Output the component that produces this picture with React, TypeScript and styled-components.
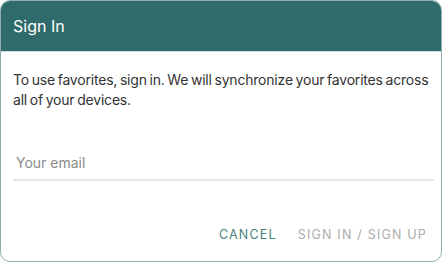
import React from 'react'
import styled, { createGlobalStyle } from 'styled-components'

const GlobalStyle = createGlobalStyle`
  html, body {
    margin: 0;
    padding: 0;
    background: #ffffff;
  }
  * {
    box-sizing: border-box;
  }
`

const Dialog = styled.div`
  width: 442px;
  height: 262px;
  border: 1px solid #8cafae;
  border-radius: 10px;
  overflow: hidden;
  display: flex;
  flex-direction: column;
  background: #ffffff;
  font-family: Inter, "Liberation Sans", sans-serif;
`

const Header = styled.div`
  height: 51px;
  background: #2f6b6a;
  color: #ffffff;
  display: flex;
  align-items: center;
  padding: 0 12px 0;
  font-size: 16px;
  border-bottom: 1px solid #cfe0df;
`

const Body = styled.div`
  flex: 1;
  display: flex;
  flex-direction: column;
  padding: 18px 7px 0 12px;
`

const Message = styled.p`
  margin: 0 -5px 0 0;
  font-size: 14px;
  line-height: 20px;
  color: #333333;
  letter-spacing: -0.2px;
  word-spacing: -1px;
`

const EmailInput = styled.input`
  margin-top: 42px;
  width: 421px;
  height: 29px;
  border: none;
  border-bottom: 2px solid #e6e6e6;
  outline: none;
  padding: 0 3px 6px;
  font-family: inherit;
  font-size: 14px;
  color: #333333;
  &::placeholder {
    color: #8a8a8a;
  }
`

const Actions = styled.div`
  display: flex;
  justify-content: flex-end;
  gap: 21px;
  margin-top: 46px;
  padding-right: 7px;
`

const ActionButton = styled.button<{ $enabled: boolean }>`
  background: none;
  border: none;
  padding: 0;
  font-family: inherit;
  font-size: 12.5px;
  letter-spacing: 1.2px;
  text-transform: uppercase;
  color: ${(p) => (p.$enabled ? '#4a7f7e' : '#acacac')};
  cursor: ${(p) => (p.$enabled ? 'pointer' : 'default')};
`

export default function App() {
  return (
    <>
      <GlobalStyle />
      <Dialog>
        <Header>Sign In</Header>
        <Body>
          <Message>
            To use favorites, sign in. We will synchronize your favorites across all of your devices.
          </Message>
          <EmailInput placeholder="Your email" />
          <Actions>
            <ActionButton $enabled>Cancel</ActionButton>
            <ActionButton $enabled={false}>Sign in / Sign up</ActionButton>
          </Actions>
        </Body>
      </Dialog>
    </>
  )
}
